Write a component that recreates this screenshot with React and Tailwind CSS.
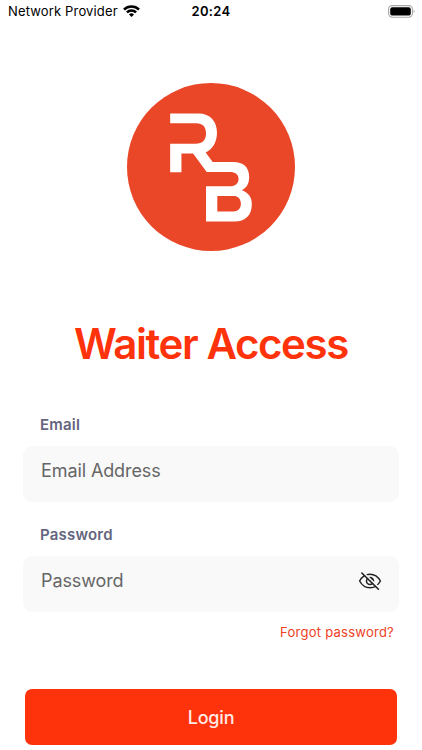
import React, { useState } from "react";

function StatusBar() {
  return (
    <div className="grid h-[22px] grid-cols-3 items-center pr-[7px] pl-[7px] text-[13px] leading-none text-black">
      <div className="flex items-center gap-[5px] whitespace-nowrap pl-px">
        <span className="tracking-[0.15px]">Network Provider</span>
        <svg className="h-3 w-[17px] shrink-0" viewBox="0 0 17 12" fill="none" stroke="currentColor" strokeWidth="2.5">
          <path d="M1 4.5a10.7 10.7 0 0 1 15 0" />
          <path d="M3.9 7.4a6.6 6.6 0 0 1 9.2 0" />
          <path d="M8.5 12 6 9.5a3.6 3.6 0 0 1 5 0z" fill="currentColor" stroke="none" />
        </svg>
      </div>
      <span className="text-center font-semibold tracking-[0.3px]">20:24</span>
      <svg className="h-[13px] w-[27px] justify-self-end" viewBox="0 0 27 13">
        <rect x="0.6" y="0.6" width="23.8" height="11.6" rx="3.6" fill="none" stroke="#a8a8a8" strokeWidth="1.1" />
        <rect x="2.2" y="2.2" width="20.6" height="8.4" rx="2.2" fill="#000" />
        <path d="M25.6 4.5c1.3.5 1.3 3.3 0 3.8z" fill="#a8a8a8" />
      </svg>
    </div>
  );
}

function Logo() {
  return (
    <svg className="size-[168px]" viewBox="20 19 506 506" role="img" aria-label="RB">
      <circle cx="273" cy="272" r="253" fill="#ea4729" />
      <path
        fill="#fff"
        fillRule="evenodd"
        d="M150 111H236C270 111 291 135 291 168C291 196 279 218 257 228L278 257H340C370 257 388 272 388 302C388 322 380 334 366 342C386 350 396 362 396 384C396 418 376 436 344 436H258V330H330C346 330 356 321 356 308C356 295 346 287 330 287H260L219 231H184V288H150V202H226C248 202 258 190 258 171C258 150 248 140 228 140H150ZM292 359V406H340C354 406 363 398 363 383C363 367 354 359 340 359Z"
      />
    </svg>
  );
}

function EyeIcon({ off }) {
  return (
    <svg className="h-[18px] w-6" viewBox="0 0 24 18" fill="none" stroke="#222" strokeWidth="1.5" strokeLinecap="round">
      <path d="M1.6 9C3.8 5 7.6 2.2 12 2.2S20.2 5 22.4 9C20.2 13 16.4 15.8 12 15.8S3.8 13 1.6 9z" />
      <circle cx="12" cy="9" r="3.5" />
      <path d="M12 9V5.5A3.5 3.5 0 0 1 15.5 9z" fill="#222" stroke="none" />
      {off && (
        <>
          <path d="M5.2.4 21.4 16" stroke="#f9f9f9" strokeWidth="1.7" />
          <path d="M3.8 1 20.4 17.2" strokeWidth="1.6" />
        </>
      )}
    </svg>
  );
}

function Field({ label, children, ...props }) {
  return (
    <label className="block">
      <span className="block pl-[17px] text-[15px] leading-5 font-semibold tracking-[0.2px] text-[#64647e]">{label}</span>
      <span className="mt-[11px] flex h-14 items-center rounded-[9px] bg-[#f9f9f9] pr-[17px] pb-1.5 pl-[18px]">
        <input
          className="min-w-0 flex-1 bg-transparent text-[18px] leading-6 tracking-[-0.1px] text-[#333] outline-none placeholder:text-[#666]"
          {...props}
        />
        {children}
      </span>
    </label>
  );
}

export default function App() {
  const [email, setEmail] = useState("");
  const [password, setPassword] = useState("");
  const [visible, setVisible] = useState(false);

  return (
    <main className="flex h-[750px] flex-col overflow-hidden bg-white font-['Inter',sans-serif]">
      <StatusBar />
      <div className="mt-[61px] flex justify-center">
        <Logo />
      </div>
      <h1 className="mt-[67px] text-center text-[42px] leading-[52px] font-semibold tracking-[-1.4px] text-[#ff330b]">
        Waiter Access
      </h1>

      <form className="mt-[44.6px] px-[23px]" onSubmit={(e) => e.preventDefault()}>
        <Field label="Email" type="email" placeholder="Email Address" value={email} onChange={(e) => setEmail(e.target.value)} />
        <div className="mt-[23px]">
          <Field
            label="Password"
            type={visible ? "text" : "password"}
            placeholder="Password"
            value={password}
            onChange={(e) => setPassword(e.target.value)}
          >
            <button type="button" aria-label="Toggle password" onClick={() => setVisible(!visible)}>
              <EyeIcon off={!visible} />
            </button>
          </Field>
        </div>
        <div className="mt-2.5 flex justify-end pr-[5px]">
          <a href="#" className="text-[13px] leading-5 tracking-[0.25px] text-[#ee4023]">
            Forgot password?
          </a>
        </div>
        <button
          type="submit"
          className="mx-0.5 mt-[47.4px] flex h-14 w-[372px] items-center justify-center rounded-[7px] bg-[#ff330b] pt-px text-[18px] font-medium tracking-[-0.2px] text-[#ffebe5]"
        >
          Login
        </button>
      </form>
    </main>
  );
}
